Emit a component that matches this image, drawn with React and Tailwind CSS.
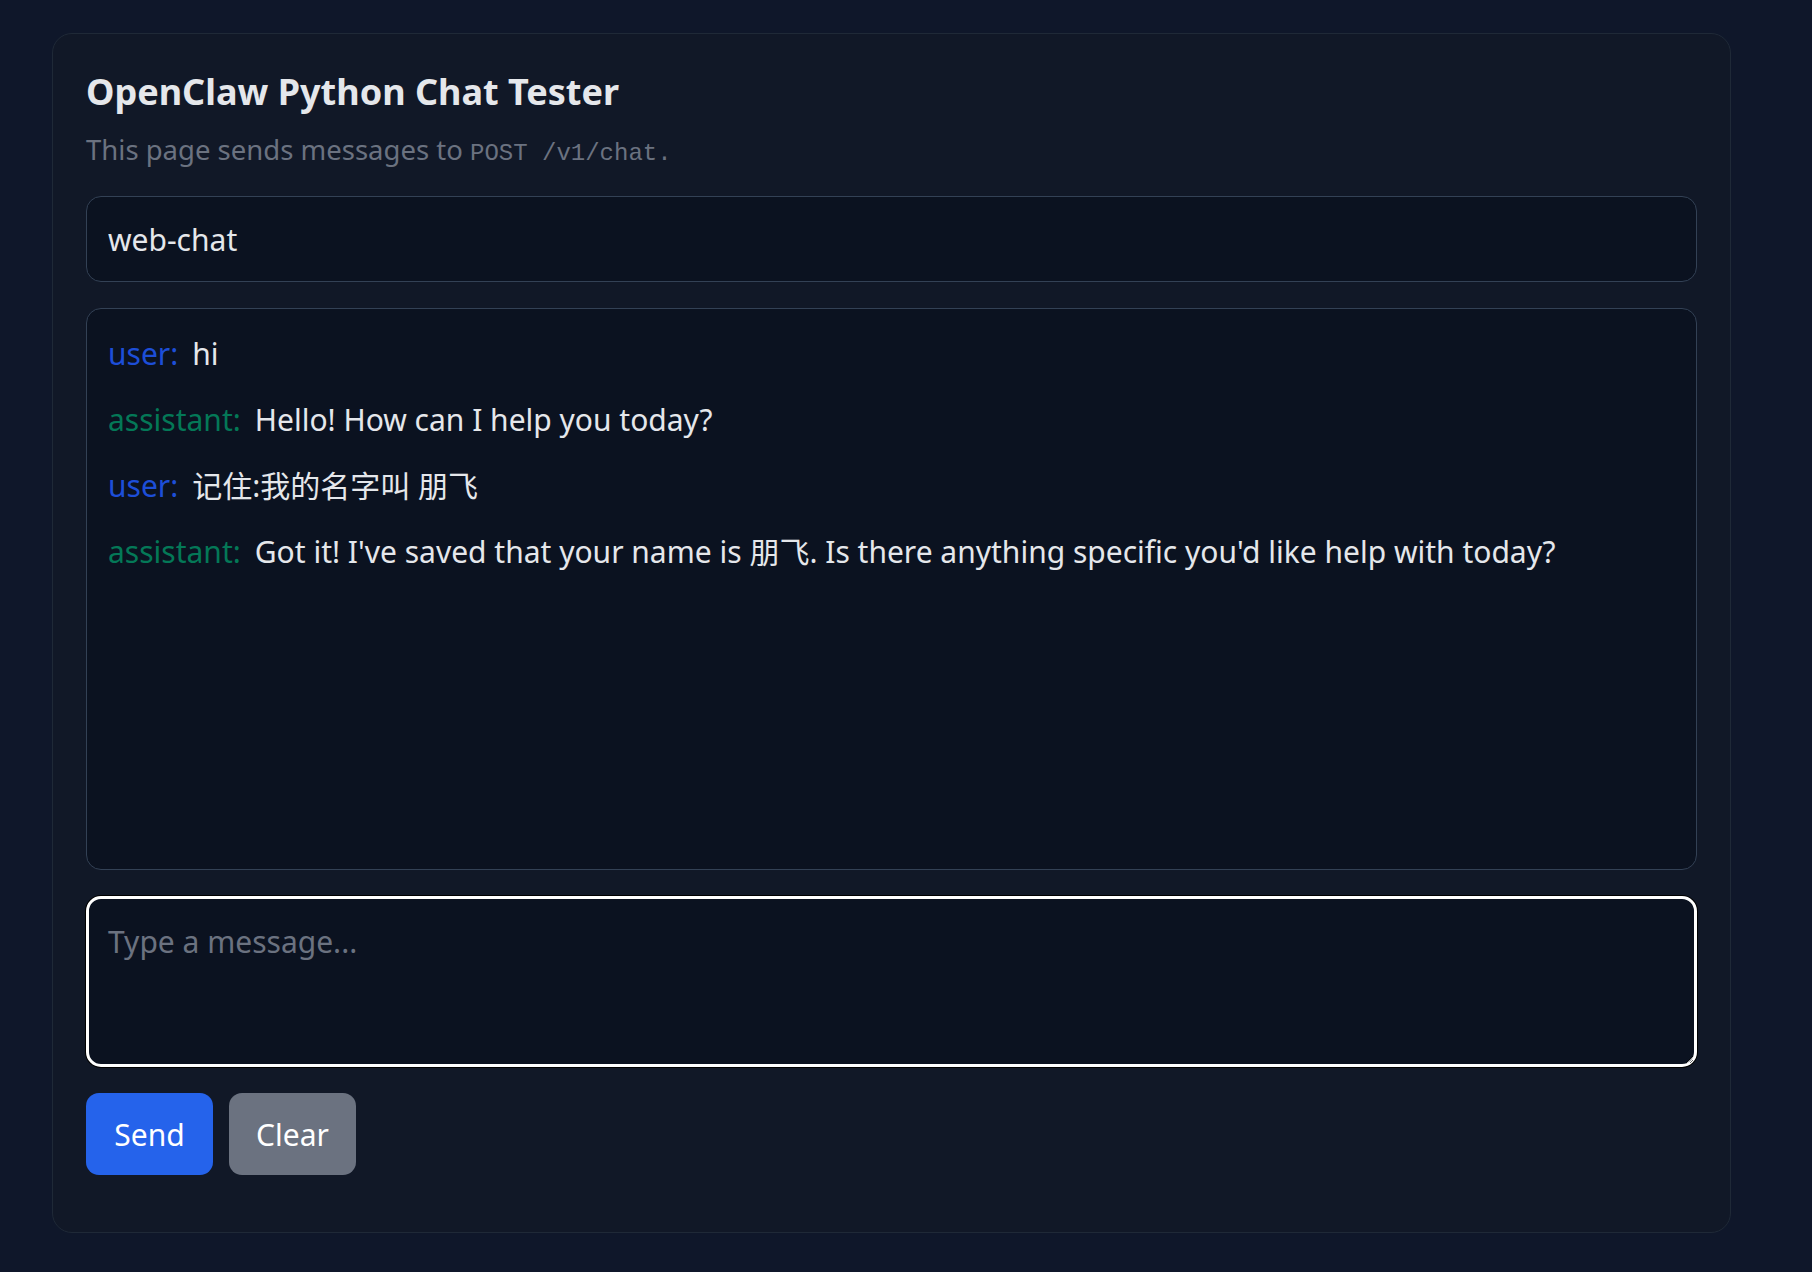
import React, { useState } from 'react';

const messages = [
  { role: 'user', text: 'hi' },
  { role: 'assistant', text: 'Hello! How can I help you today?' },
  { role: 'user', text: '记住:我的名字叫 朋飞' },
  {
    role: 'assistant',
    text: "Got it! I've saved that your name is 朋飞. Is there anything specific you'd like help with today?",
  },
];

const App = () => {
  const [sessionId, setSessionId] = useState('web-chat');
  const [draft, setDraft] = useState('');

  return (
    <div className="min-h-screen bg-[#0f172a] pl-[52px] pt-[33px] pb-10 font-['Noto_Sans','Noto_Sans_CJK_SC',sans-serif]">
      <div className="w-[1679px] rounded-[20px] border border-[#1f2937] bg-[#111827] px-[33px] pt-[36px] pb-[57px]">
        <h1 className="text-[36px] leading-[44px] font-bold text-[#e5e7eb]">OpenClaw Python Chat Tester</h1>
        <p className="mt-[16px] text-[27.5px] leading-[40px] text-[#6b7280]">
          This page sends messages to{' '}
          <code className="font-['Liberation_Mono',monospace] text-[24px]">POST /v1/chat</code>
          <span className="font-['Liberation_Mono',monospace] text-[24px]">.</span>
        </p>

        <input
          value={sessionId}
          onChange={(e) => setSessionId(e.target.value)}
          className="mt-[22px] block h-[86px] w-full rounded-[15px] border border-[#334155] bg-[#0b1220] px-[21px] text-[30px] text-[#e5e7eb] outline-none"
        />

        <div className="mt-[26px] flex h-[562px] flex-col gap-[21px] overflow-y-auto rounded-[15px] border border-[#334155] bg-[#0b1220] px-[21px] pt-[22px] pb-[20px]">
          {messages.map((m, i) => (
            <div key={i} className="text-[30px] leading-[45px] text-[#e5e7eb]">
              <span className={m.role === 'user' ? 'mr-[14px] text-[#1d4ed8]' : 'mr-[14px] text-[#047857]'}>
                {m.role}:
              </span>
              {m.text}
            </div>
          ))}
        </div>

        <textarea
          value={draft}
          onChange={(e) => setDraft(e.target.value)}
          placeholder="Type a message..."
          className="mt-[26px] block h-[171px] w-full rounded-[15px] border-[3px] border-white bg-[#0b1220] px-[19px] pt-[20px] pb-[10px] text-[30px] leading-[45px] text-[#e5e7eb] shadow-[0_0_0_1px_#000] outline-none placeholder:text-[#6b7280]"
        />

        <div className="mt-[26px] flex gap-[16px]">
          <button className="h-[82px] w-[127px] rounded-[13px] bg-[#2563eb] text-[30px] text-white">Send</button>
          <button className="h-[82px] w-[127px] rounded-[13px] bg-[#6b7280] text-[30px] text-white">Clear</button>
        </div>
      </div>
    </div>
  );
};

export default App;
